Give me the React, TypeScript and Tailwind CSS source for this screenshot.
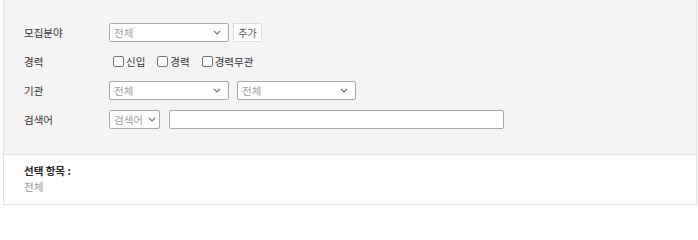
const font = { fontFamily: '"Noto Sans CJK KR", "Noto Sans", sans-serif' };

const Chevron = () => (
  <svg width="8" height="5" viewBox="0 0 8 5" className="shrink-0">
    <path d="M1 1 L4 4 L7 1" fill="none" stroke="#777" strokeWidth="1.2" />
  </svg>
);

const FakeSelect = ({ text, width, pr }: { text: string; width: string; pr: string }) => (
  <div
    className={`${width} ${pr} h-[19px] flex items-center justify-between bg-white border border-[#a9a9a9] rounded-[2px] pl-[4px] text-[10.5px] text-[#a0a0a0]`}
  >
    <span>{text}</span>
    <Chevron />
  </div>
);

const Check = ({ label }: { label: string }) => (
  <label className="flex items-center gap-[2px] mr-[12px]">
    <span className="w-[11px] h-[11px] border border-[#767676] rounded-[2px] bg-white" />
    <span className="text-[10.5px] text-[#333]">{label}</span>
  </label>
);

const Row = ({ label, children }: { label: string; children: React.ReactNode }) => (
  <div className="flex items-center h-[19px]">
    <div className="w-[85px] text-[10.5px] text-[#333]">{label}</div>
    <div className="flex items-center">{children}</div>
  </div>
);

const App = () => {
  return (
    <div className="w-[698px] h-[211px] bg-white pl-[3px] pr-[1px]" style={font}>
      <div className="border-x border-b border-[#e2e2e2]">
        {/* search area */}
        <div className="bg-[#f4f4f4] border-b border-[#e2e2e2] pl-[20px] pt-[23px] pb-[25px] flex flex-col gap-y-[10px]">
          <Row label="모집분야">
            <FakeSelect text="전체" width="w-[120px]" pr="pr-[7px]" />
            <button className="ml-[4px] h-[19px] w-[29px] bg-white border border-[#dcdcdc] text-[10px] text-[#555]">
              추가
            </button>
          </Row>
          <Row label="경력">
            <div className="flex items-center pl-[4px]">
              <Check label="신입" />
              <Check label="경력" />
              <Check label="경력무관" />
            </div>
          </Row>
          <Row label="기관">
            <FakeSelect text="전체" width="w-[120px]" pr="pr-[7px]" />
            <div className="ml-[8px]">
              <FakeSelect text="전체" width="w-[119px]" pr="pr-[7px]" />
            </div>
          </Row>
          <Row label="검색어">
            <FakeSelect text="검색어" width="w-[51px]" pr="pr-[3px]" />
            <input className="ml-[9px] w-[335px] h-[19px] bg-white border border-[#a9a9a9] rounded-[2px] outline-none" />
          </Row>
        </div>
        {/* selected items */}
        <div className="bg-white pl-[20px] pt-[8px] pb-[9px]">
          <div className="text-[10.5px] font-bold text-[#222] leading-[16px]">선택 항목 :</div>
          <div className="text-[10.5px] text-[#999] leading-[16px]">전체</div>
        </div>
      </div>
    </div>
  );
};

export default App;
